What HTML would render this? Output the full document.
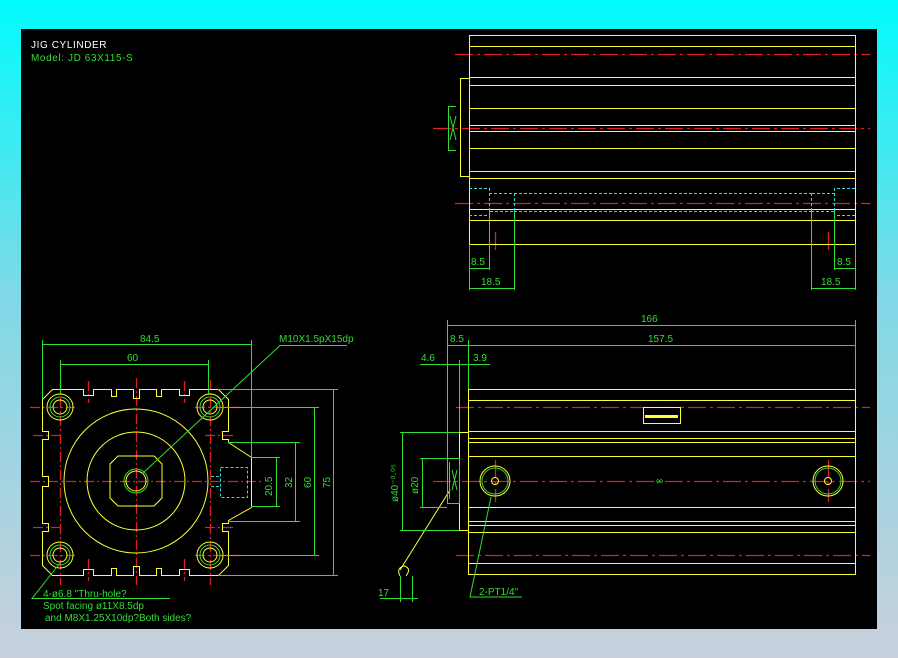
<!DOCTYPE html>
<html><head><meta charset="utf-8"><style>
html,body{margin:0;padding:0;width:898px;height:658px;overflow:hidden;background:linear-gradient(#00fcfc 0%,#80d8e6 45%,#c8d0dc 100%);}
svg{position:absolute;left:0;top:0}
text{font-family:"Liberation Sans",sans-serif;font-size:10px;}
</style></head><body>
<svg width="898" height="658" viewBox="0 0 898 658">
<rect x="21" y="29" width="856" height="600" fill="#000"/>
<text x="31" y="48" fill="#fff" letter-spacing="0.6">JIG CYLINDER</text>
<text x="31" y="61" fill="#33dd33" letter-spacing="0.6">Model: JD 63X115-S</text>

<!-- TOP RIGHT VIEW -->
<g stroke="#e02020" stroke-width="1.3" stroke-dasharray="18,4,3,4" fill="none">
<line x1="455" y1="54.5" x2="870" y2="54.5"/>
<line x1="433" y1="128.5" x2="870" y2="128.5"/>
<line x1="455" y1="203.5" x2="870" y2="203.5"/>
<line x1="495.5" y1="232" x2="495.5" y2="252"/>
<line x1="828.5" y1="232" x2="828.5" y2="252"/>
</g>
<g stroke="#ffff33" stroke-width="1" fill="none">
<rect x="469.5" y="35.5" width="386" height="209"/>
<line x1="469" y1="46.5" x2="855" y2="46.5"/>
<line x1="469" y1="77.5" x2="855" y2="77.5"/>
<line x1="469" y1="85.5" x2="855" y2="85.5"/>
<line x1="469" y1="108.5" x2="855" y2="108.5"/>
<line x1="469" y1="125.5" x2="855" y2="125.5"/>
<line x1="469" y1="131.5" x2="855" y2="131.5"/>
<line x1="469" y1="148.5" x2="855" y2="148.5"/>
<line x1="469" y1="171.5" x2="855" y2="171.5"/>
<line x1="469" y1="178.5" x2="855" y2="178.5"/>
<line x1="469" y1="209.5" x2="855" y2="209.5"/>
<line x1="469" y1="220.5" x2="855" y2="220.5"/>
<path d="M469 78.5 H460.5 V176.5 H469"/>
</g>
<g stroke="#33dd33" fill="none">
<path d="M448.5 106 V150 M448 106.5 H456 M448 150.5 H456 M450 116 L456 140 M456 116 L450 140"/>
</g>
<g stroke="#33dddd" stroke-dasharray="3,2" fill="none">
<path d="M469 188.5 H489.5 V193.5 H514 M469 215.5 H489.5 V211.5 H514 M514.5 193 V211 M489.5 193 V211"/>
<path d="M855 188.5 H834.5 V193.5 H811 M855 215.5 H834.5 V211.5 H811 M811.5 193 V211 M834.5 193 V211"/>
<line x1="514" y1="193.5" x2="811" y2="193.5"/>
<line x1="514" y1="211.5" x2="811" y2="211.5"/>
</g>
<g stroke="#33dd33" fill="none">
<path d="M469.5 244 V290 M489.5 211 V270 M514.5 211 V290 M469 268.5 H489 M469 288.5 H514"/>
<path d="M855.5 244 V290 M834.5 211 V270 M811.5 211 V290 M834 268.5 H855 M811 288.5 H855"/>
</g>
<g fill="#33dd33">
<text x="471" y="265">8.5</text><text x="481" y="285">18.5</text>
<text x="837" y="265">8.5</text><text x="821" y="285">18.5</text>
</g>

<!-- BOTTOM RIGHT VIEW -->
<g stroke="#e02020" stroke-width="1.3" stroke-dasharray="18,4,3,4" fill="none">
<line x1="456" y1="407.5" x2="870" y2="407.5"/>
<line x1="433" y1="481.5" x2="870" y2="481.5"/>
<line x1="456" y1="555.5" x2="870" y2="555.5"/>
<line x1="495.5" y1="460" x2="495.5" y2="502"/>
<line x1="828.5" y1="460" x2="828.5" y2="502"/>
</g>
<g stroke="#ffff33" fill="none">
<rect x="468.5" y="389.5" width="387" height="185"/>
<line x1="468" y1="400.5" x2="855" y2="400.5"/>
<line x1="468" y1="431.5" x2="855" y2="431.5"/>
<line x1="468" y1="438.5" x2="855" y2="438.5"/>
<line x1="468" y1="442.5" x2="855" y2="442.5"/>
<line x1="468" y1="456.5" x2="855" y2="456.5"/>
<line x1="468" y1="507.5" x2="855" y2="507.5"/>
<line x1="468" y1="521.5" x2="855" y2="521.5"/>
<line x1="468" y1="525.5" x2="855" y2="525.5"/>
<line x1="468" y1="532.5" x2="855" y2="532.5"/>
<line x1="468" y1="563.5" x2="855" y2="563.5"/>
<path d="M468 432.5 H459.5 V530.5 H468"/>
<circle cx="495" cy="481" r="15"/><circle cx="828" cy="481" r="15"/>
<circle cx="495" cy="481" r="3.5"/><circle cx="828" cy="481" r="3.5"/>
<rect x="643.5" y="407.5" width="37" height="16" fill="#000"/>
<rect x="645" y="415" width="33" height="3" fill="#ffff33" stroke="none"/>
<path d="M400 570 L450 490 M400 576 q-4 -8 4 -10 q8 2 2 10"/>
</g>
<g stroke="#33dd33" fill="none">
<path d="M447.5 458.5 H459.5 V503.5 H447.5 Z M449.5 462 V499 M452 470 L457 490 M457 470 L452 490"/>
<circle cx="495" cy="481" r="13"/><circle cx="828" cy="481" r="13"/>
<path d="M447.5 320 V458 M459.5 360 V432 M468.5 340 V389 M855.5 320 V389"/>
<path d="M447 325.5 H855 M447 345.5 H855 M420 364.5 H490"/>
<path d="M400 432.5 H459 M400 530.5 H459 M402.5 432 V530 M420 458.5 H447 M420 507.5 H447 M422.5 458 V507"/>
<path d="M491 497 L470 597 H522"/>
<path d="M400.5 576 V602 M412.5 576 V602 M380 598.5 H418"/>
</g>
<g fill="#33dd33">
<text x="641" y="322">166</text>
<text x="450" y="342">8.5</text><text x="648" y="342">157.5</text>
<text x="421" y="361">4.6</text><text x="473" y="361">3.9</text>
<text x="479" y="595">2-PT1/4"</text>
<text x="378" y="596">17</text>
<text transform="translate(398,502) rotate(-90)">ø40⁻⁰·⁰⁵</text>
<text transform="translate(418,494) rotate(-90)">ø20</text>
<text x="656" y="484" font-size="5">∞</text>
</g>

<!-- FRONT VIEW -->
<g stroke="#e02020" stroke-width="1.3" stroke-dasharray="10,3,2,3" fill="none">
<line x1="30" y1="481.5" x2="262" y2="481.5"/>
<line x1="136.5" y1="378" x2="136.5" y2="585"/>
<line x1="60.5" y1="380" x2="60.5" y2="585"/>
<line x1="210.5" y1="380" x2="210.5" y2="585"/>
<line x1="30" y1="407.5" x2="75" y2="407.5"/><line x1="195" y1="407.5" x2="240" y2="407.5"/>
<line x1="30" y1="555.5" x2="75" y2="555.5"/><line x1="195" y1="555.5" x2="240" y2="555.5"/>
<line x1="33" y1="435.5" x2="63" y2="435.5"/><line x1="33" y1="527.5" x2="63" y2="527.5"/>
<line x1="205" y1="435.5" x2="235" y2="435.5"/><line x1="205" y1="527.5" x2="235" y2="527.5"/>
<line x1="88.5" y1="381" x2="88.5" y2="403"/><line x1="184.5" y1="381" x2="184.5" y2="403"/>
<line x1="88.5" y1="559" x2="88.5" y2="581"/><line x1="184.5" y1="559" x2="184.5" y2="581"/>
</g>
<g stroke="#ffff33" fill="none">
<path d="M52.5 389.5 H83.5 V395.5 H93.5 V389.5 H111.5 V396.5 H116.5 V389.5 H133.5 V398.5 H139.5 V389.5 H156.5 V396.5 H161.5 V389.5 H179.5 V395.5 H189.5 V389.5 H218.5 L228.5 399.5 V431.5 H222.5 V439.5 H228.5 V442.5 L251.5 457.5 V507.5 L228.5 520.5 V523.5 H222.5 V531.5 H228.5 V565.5 L218.5 575.5 H189.5 V569.5 H179.5 V575.5 H161.5 V568.5 H156.5 V575.5 H139.5 V566.5 H133.5 V575.5 H116.5 V568.5 H111.5 V575.5 H93.5 V569.5 H83.5 V575.5 H52.5 L42.5 565.5 V531.5 H48.5 V523.5 H42.5 V486.5 H48.5 V476.5 H42.5 V439.5 H48.5 V431.5 H42.5 V399.5 Z"/>
<circle cx="136" cy="481" r="72"/>
<circle cx="136" cy="481" r="49"/>
<path d="M118 456 H154 L162 464 V498 L154 506 H118 L110 498 V464 Z"/>
<circle cx="136" cy="481" r="10"/>
<circle cx="60" cy="407" r="13"/><circle cx="210" cy="407" r="13"/>
<circle cx="60" cy="555" r="13"/><circle cx="210" cy="555" r="13"/>
<circle cx="60" cy="407" r="7"/><circle cx="210" cy="407" r="7"/>
<circle cx="60" cy="555" r="7"/><circle cx="210" cy="555" r="7"/>
</g>
<g stroke="#33dd33" fill="none">
<circle cx="136" cy="481" r="12"/>
<circle cx="60" cy="407" r="10"/><circle cx="210" cy="407" r="10"/>
<circle cx="60" cy="555" r="10"/><circle cx="210" cy="555" r="10"/>
<path d="M42.5 340 V399 M251.5 340 V457 M42 344.5 H251 M60.5 360 V394 M208.5 360 V394 M60 364.5 H208"/>
<path d="M251 457.5 H280 M251 506.5 H280 M276.5 457 V506 M228 442.5 H300 M228 521.5 H300 M295.5 442 V521 M220 407.5 H319 M220 555.5 H319 M314.5 407 V555 M218 389.5 H338 M218 575.5 H338 M333.5 389 V575"/>
<path d="M142 474 L280 345.5 H347"/>
<path d="M60 563 L32 598.5 H170"/>
</g>
<g stroke="#33dddd" stroke-dasharray="3,2" fill="none">
<rect x="220.5" y="467.5" width="27" height="30"/>
<path d="M211 476.5 H220 M211 486.5 H220"/>
</g>
<g fill="#33dd33">
<text x="140" y="342">84.5</text>
<text x="127" y="361">60</text>
<text x="279" y="342" font-size="9">M10X1.5pX15dp</text>
<text transform="translate(272,496) rotate(-90)">20.5</text>
<text transform="translate(292,488) rotate(-90)">32</text>
<text transform="translate(311,488) rotate(-90)">60</text>
<text transform="translate(330,488) rotate(-90)">75</text>
<text x="43" y="597" font-size="8.5">4-ø6.8 "Thru-hole?</text>
<text x="43" y="609" font-size="8.5">Spot facing ø11X8.5dp</text>
<text x="45" y="621" font-size="8.5">and M8X1.25X10dp?Both sides?</text>
</g>
</svg>
</body></html>
